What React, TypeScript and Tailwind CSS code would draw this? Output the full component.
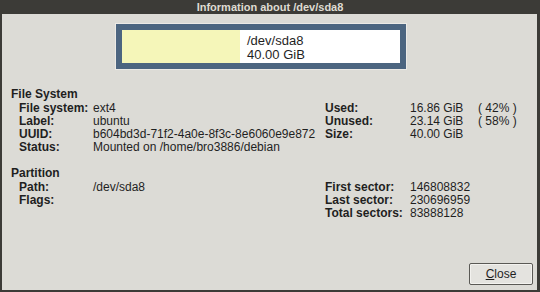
const rowsLeft = [
  ["File system:", "ext4"],
  ["Label:", "ubuntu"],
  ["UUID:", "b604bd3d-71f2-4a0e-8f3c-8e6060e9e872"],
  ["Status:", "Mounted on /home/bro3886/debian"],
]

const rowsRight = [
  ["Used:", "16.86 GiB", "( 42% )"],
  ["Unused:", "23.14 GiB", "( 58% )"],
  ["Size:", "40.00 GiB", ""],
]

const partLeft = [
  ["Path:", "/dev/sda8"],
  ["Flags:", ""],
]

const partRight = [
  ["First sector:", "146808832"],
  ["Last sector:", "230696959"],
  ["Total sectors:", "83888128"],
]

export default function App() {
  return (
    <div className="w-[540px] h-[292px] flex flex-col bg-[#3c3b37] text-[#1f1f1f] font-['Liberation_Sans',sans-serif] overflow-hidden">
      <div className="h-[14px] flex items-center justify-center text-[11px] font-bold text-[#dfdbd2] leading-none">
        Information about /dev/sda8
      </div>
      <div className="flex-1 mx-[2px] mb-[2px] mr-[3px] bg-[#dcdbd6] flex flex-col text-[12px] leading-[13px]">
        {/* partition graphic */}
        <div className="ml-[114px] mt-[10px] w-[290px] h-[45px] border-[6px] border-[#4c6580] bg-white flex shadow-[0_0_0_1px_#eceae6]">
          <div className="w-[118px] bg-[#f5f6b9]"></div>
          <div className="pl-[7px] pt-[4px] text-[13px] leading-[14px]">
            <div>/dev/sda8</div>
            <div>40.00 GiB</div>
          </div>
        </div>

        {/* file system */}
        <div className="mt-[19px] pl-[9px]">
          <div className="font-bold mb-[1px]">File System</div>
          <div className="flex">
            <div className="w-[314px]">
              {rowsLeft.map(([k, v]) => (
                <div key={k} className="flex pl-[8px]">
                  <span className="w-[74px] font-bold">{k}</span>
                  <span>{v}</span>
                </div>
              ))}
            </div>
            <div>
              {rowsRight.map(([k, v, p]) => (
                <div key={k} className="flex">
                  <span className="w-[85px] font-bold">{k}</span>
                  <span className="w-[68px]">{v}</span>
                  <span>{p}</span>
                </div>
              ))}
            </div>
          </div>
        </div>

        {/* partition */}
        <div className="mt-[13px] pl-[9px]">
          <div className="font-bold mb-[1px]">Partition</div>
          <div className="flex">
            <div className="w-[314px]">
              {partLeft.map(([k, v]) => (
                <div key={k} className="flex pl-[8px]">
                  <span className="w-[74px] font-bold">{k}</span>
                  <span>{v}</span>
                </div>
              ))}
            </div>
            <div>
              {partRight.map(([k, v]) => (
                <div key={k} className="flex">
                  <span className="w-[85px] font-bold">{k}</span>
                  <span>{v}</span>
                </div>
              ))}
            </div>
          </div>
        </div>

        <div className="flex-1"></div>
        <div className="flex justify-end pr-[4px] pb-[5px]">
          <button className="w-[64px] h-[22px] border border-[#5a5955] rounded-[2px] bg-[#e4e3df] shadow-[inset_0_0_0_1px_#f3f2ef] text-[12px]">
            <span className="underline">C</span>lose
          </button>
        </div>
      </div>
    </div>
  )
}
